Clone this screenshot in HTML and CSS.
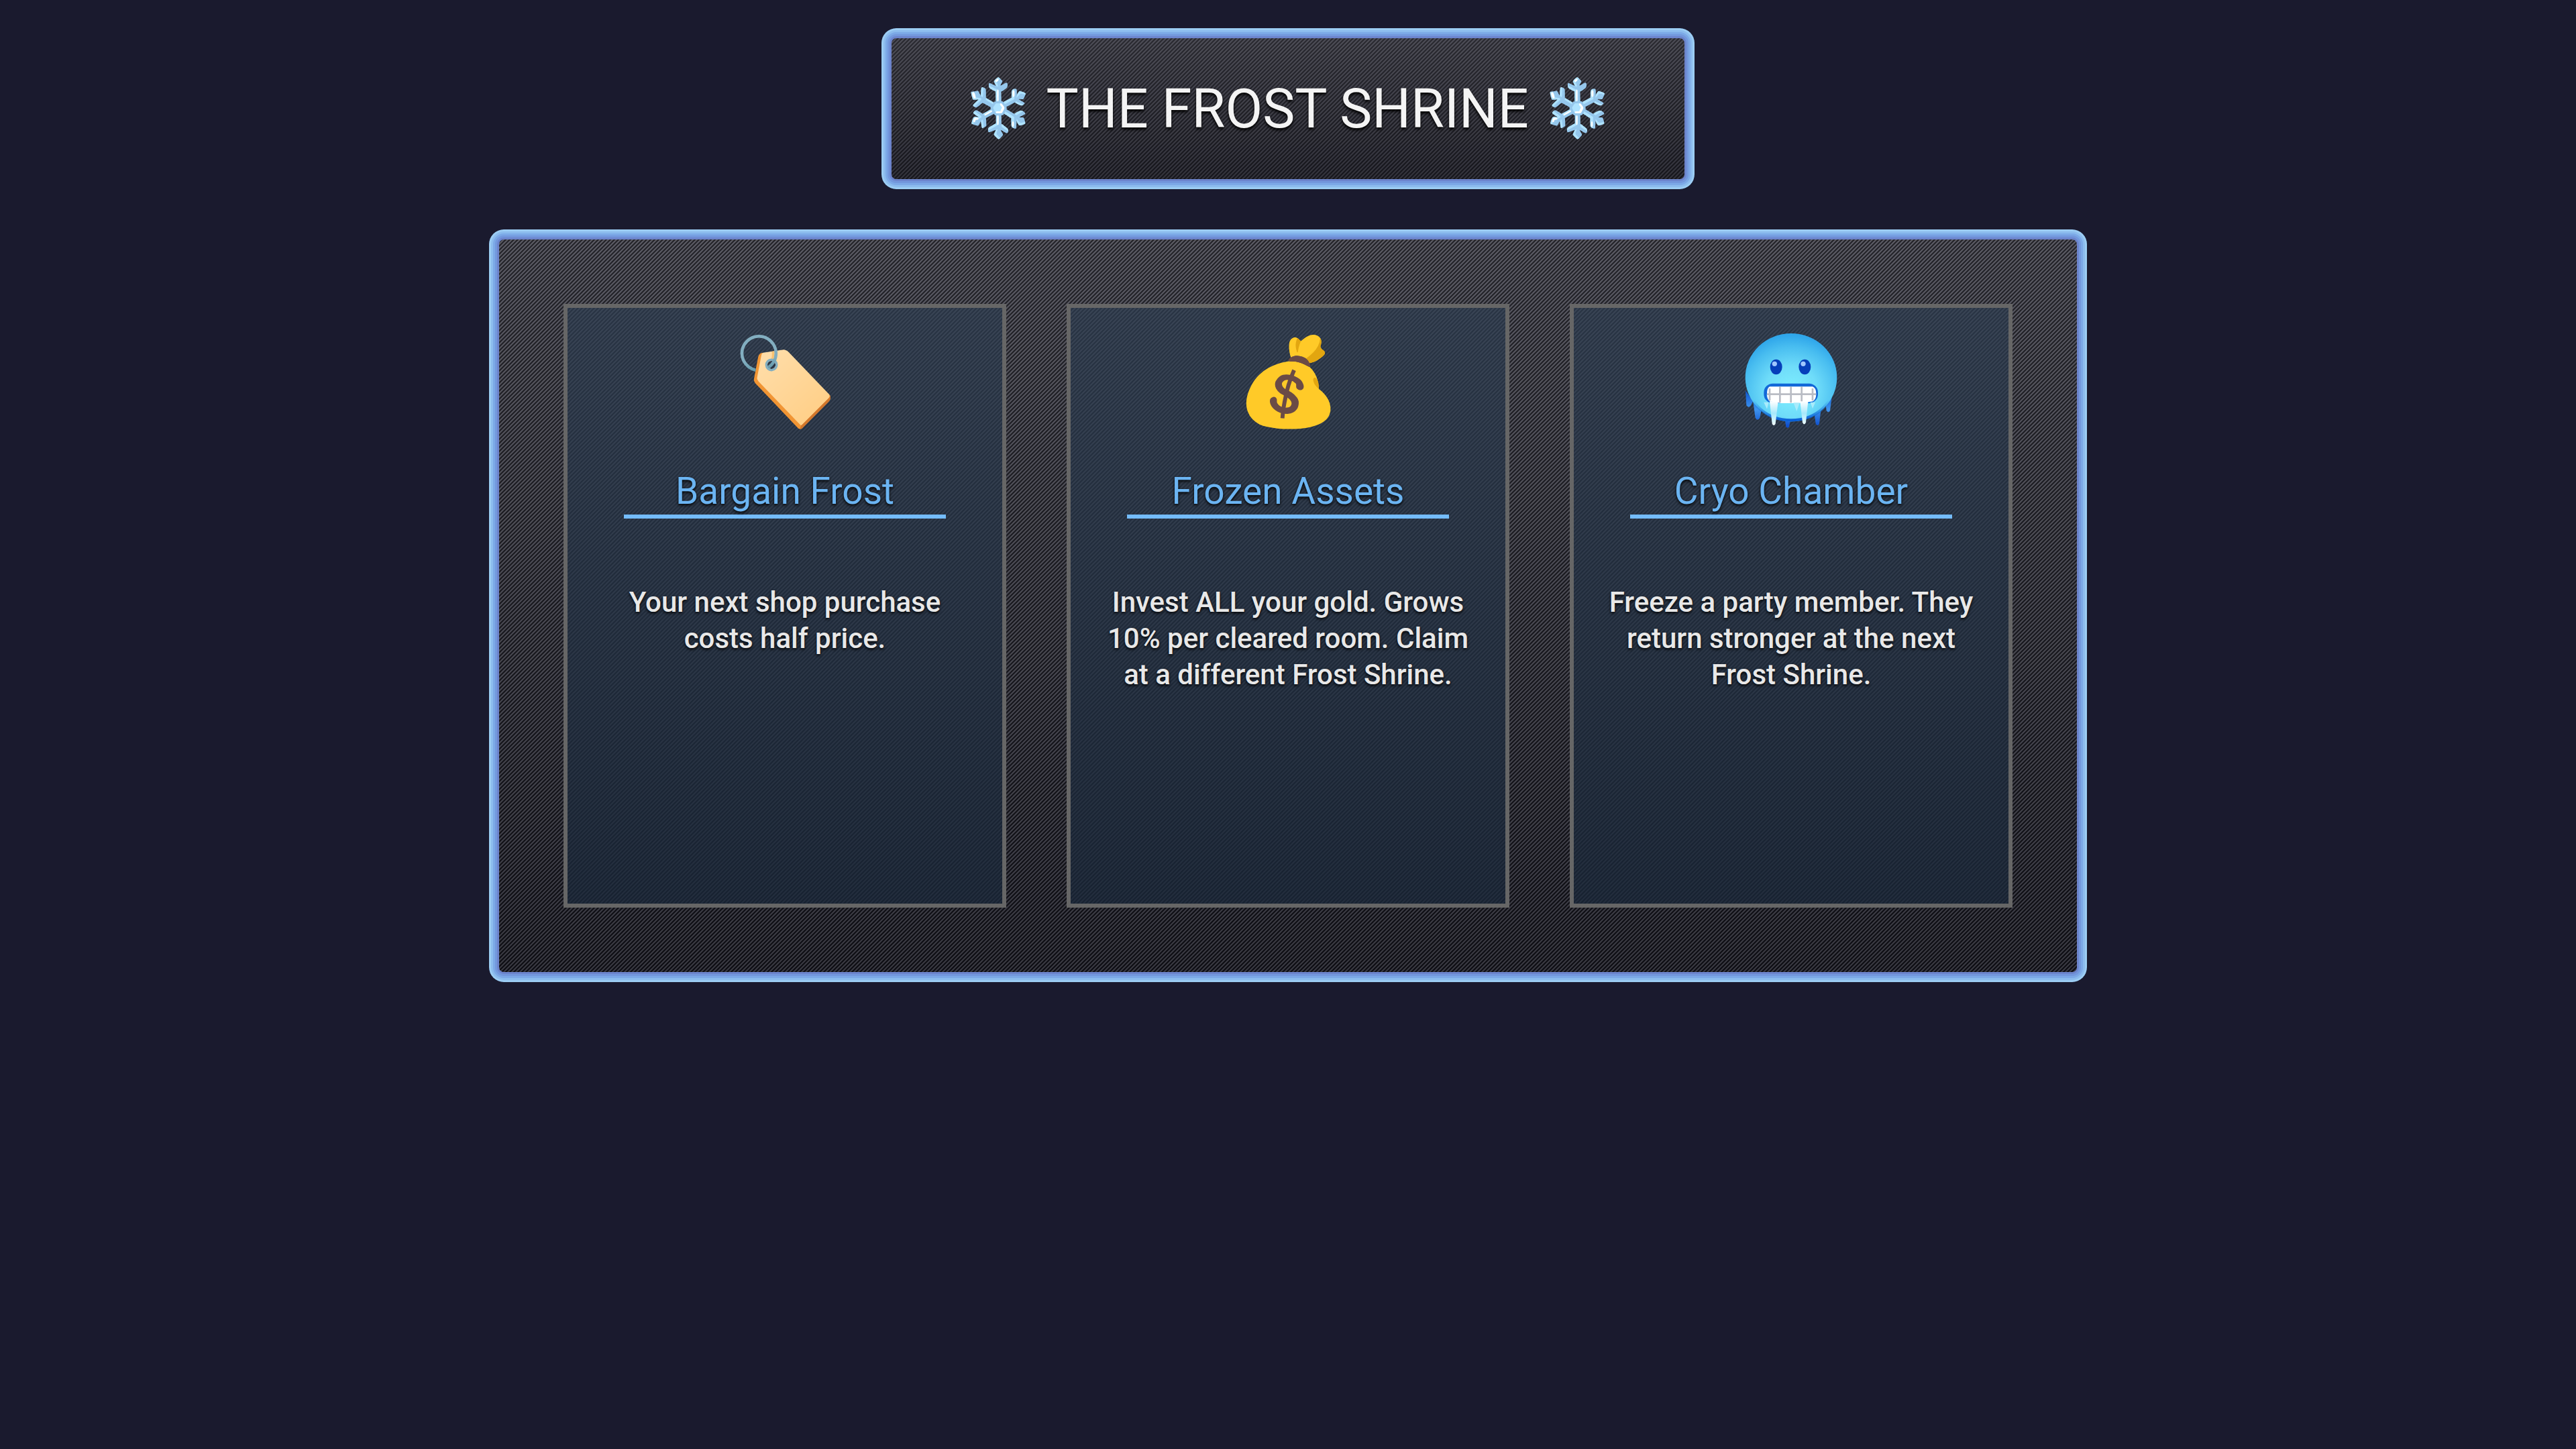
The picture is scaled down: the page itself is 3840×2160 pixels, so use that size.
FILE: index.html
```
<!DOCTYPE html>
<html lang="en">
<head>
<meta charset="UTF-8">
<meta name="viewport" content="width=device-width, initial-scale=1.0">
<title>The Frost Shrine</title>
<link rel="stylesheet" href="styles.css">
</head>
<body>
<main class="shrine">
  <h1 class="frame shrine-title"><span class="flake">❄️</span> THE FROST SHRINE <span class="flake">❄️</span></h1>
  <div class="frame shrine-panel">
    <button type="button" class="option">
      <span class="option-icon">🏷️</span>
      <span class="option-name">Bargain Frost</span>
      <span class="option-text">Your next shop purchase costs half price.</span>
    </button>
    <button type="button" class="option">
      <span class="option-icon">💰</span>
      <span class="option-name">Frozen Assets</span>
      <span class="option-text">Invest ALL your gold. Grows 10% per cleared room. Claim at a different Frost Shrine.</span>
    </button>
    <button type="button" class="option">
      <span class="option-icon">
        <svg class="cold-face" viewBox="30 30 480 480" aria-hidden="true">
          <defs>
            <radialGradient id="skin" cx="50%" cy="66%" r="64%">
              <stop offset="0" stop-color="#7ff0ff"/>
              <stop offset="0.45" stop-color="#6fdcf9"/>
              <stop offset="0.8" stop-color="#48bdf0"/>
              <stop offset="1" stop-color="#2fa6ea"/>
            </radialGradient>
            <linearGradient id="rim" x1="0" y1="0" x2="0" y2="1">
              <stop offset="0.5" stop-color="#0f6fdc" stop-opacity="0"/>
              <stop offset="1" stop-color="#0a5fd6"/>
            </linearGradient>
            <linearGradient id="drip" x1="0" y1="0" x2="0" y2="1">
              <stop offset="0" stop-color="#0b55d0"/>
              <stop offset="0.5" stop-color="#3f95ee"/>
              <stop offset="1" stop-color="#0a48c8"/>
            </linearGradient>
            <linearGradient id="ice" x1="0" y1="0" x2="0" y2="1">
              <stop offset="0" stop-color="#ffffff"/>
              <stop offset="0.5" stop-color="#a6e8fb"/>
              <stop offset="1" stop-color="#f4fdff"/>
            </linearGradient>
          </defs>
          <path fill="url(#drip)" d="M66 310l4 66q10 14 20 0l10-20zM100 360l10 72q10 16 20 0l8-40zM242 436l5 36q7 8 14 0l7-36zM372 400l8 58q9 14 16 0l8-70zM422 350l6 50q9 12 16 0l8-62z"/>
          <ellipse cx="270" cy="251" rx="205" ry="197" fill="url(#skin)"/>
          <path fill="none" stroke="url(#rim)" stroke-width="13" d="M71 260c4 108 90 182 199 182s195-74 199-182"/>
          <ellipse cx="203" cy="204" rx="27" ry="34" fill="#063fba"/>
          <ellipse cx="331" cy="204" rx="27" ry="34" fill="#063fba"/>
          <circle cx="196" cy="190" r="11" fill="#9fc6ff"/>
          <circle cx="324" cy="190" r="11" fill="#9fc6ff"/>
          <rect x="148" y="278" width="242" height="88" rx="40" fill="#1268d8"/>
          <path fill="#35a0ee" d="M160 324h222q0 36-34 40H194q-34-4-34-40z"/>
          <path fill="#fff" d="M174 292h192q16 6 16 32t-16 34l-60 8h-80l-50-8q-14-8-14-34t12-32z"/>
          <path fill="none" stroke="#b9bcc4" stroke-width="8" d="M162 326h219M220 292v70M269 292v72M317 292v70M174 300v54M366 300v54"/>
          <path fill="url(#ice)" d="M174 358h38l-12 100q-8 14-15 0zM310 358h36l-10 94q-8 16-15 0z"/>
          <path fill="#a9ebfb" d="M148 362h22l-8 30zM280 364h28l-13 38zM356 362h22l-12 28z"/>
        </svg>
      </span>
      <span class="option-name">Cryo Chamber</span>
      <span class="option-text">Freeze a party member. They return stronger at the next Frost Shrine.</span>
    </button>
  </div>
</main>
</body>
</html>
```
FILE: styles.css
```
* {
  box-sizing: border-box;
}
body {
  margin: 0;
  background-color: #1a1a2e;
  color: #f4f4f4;
  font-family: Roboto, "Liberation Sans", sans-serif;
}
.shrine {
  display: flex;
  flex-direction: column;
  align-items: center;
  gap: 60px;
  padding: 42px 0;
}

/* icy rim: stacked inset rings, light outside to deep blue inside */
.frame {
  border-radius: 22px;
  box-shadow:
    inset 0 0 0 3px #9ccdf3,
    inset 0 0 0 6px #8cbcee,
    inset 0 0 0 9px #7ca9e7,
    inset 0 0 0 12px #7398dd,
    inset 0 0 0 15px #6c84cc;
}
.shrine-title {
  margin: 0;
  padding: 61px 122px 59px;
  font-size: 81px;
  font-weight: 400;
  line-height: 120px;
  text-align: center;
  text-shadow: 0 3px 4px #000;
  background-image:
    linear-gradient(135deg, rgba(255, 255, 255, 0.07) 25%, rgba(0, 0, 0, 0.3) 25% 50%, rgba(255, 255, 255, 0.07) 50% 75%, rgba(0, 0, 0, 0.3) 75%),
    linear-gradient(#40404a, #1f1f28);
  background-size: 6px 6px, auto;
}
.flake {
  font-size: 84px;
  line-height: 1;
  text-shadow: none;
}
.shrine-panel {
  display: grid;
  grid-template-columns: repeat(3, 1fr);
  gap: 90px;
  width: 90%;
  max-width: 2382px;
  padding: 111px;
  background-image:
    linear-gradient(135deg, rgba(255, 255, 255, 0.13) 25%, rgba(0, 0, 0, 0.4) 25% 50%, rgba(255, 255, 255, 0.13) 50% 75%, rgba(0, 0, 0, 0.4) 75%),
    linear-gradient(#40404a, #181822);
  background-size: 6px 6px, auto;
}
.option {
  display: flex;
  flex-direction: column;
  align-items: center;
  justify-content: flex-start;
  min-height: 900px;
  padding: 30px 36px;
  border: 6px solid #666;
  border-radius: 0;
  color: #e8e8e8;
  font-family: inherit;
  text-align: center;
  cursor: pointer;
  background-color: transparent;
  background-image: linear-gradient(rgba(44, 60, 80, 0.7), rgba(26, 40, 58, 0.75));
}
.option:hover {
  border-color: #74bcfc;
}
.option-icon {
  height: 160px;
  margin-bottom: 48px;
  font-size: 128px;
  line-height: 160px;
}
.cold-face {
  display: block;
  width: 160px;
  height: 160px;
}
.option-name {
  width: 480px;
  max-width: 100%;
  margin-bottom: 98px;
  border-bottom: 6px solid #74bcfc;
  color: #6bb4f2;
  font-size: 55px;
  line-height: 70px;
  text-shadow: 0 2px 4px #000;
}
.option-text {
  font-size: 42px;
  font-weight: 500;
  line-height: 54px;
  text-shadow: 0 2px 4px #000;
}
```
